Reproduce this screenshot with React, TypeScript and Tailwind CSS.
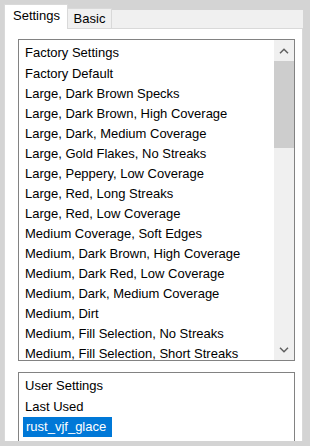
import React from "react";

const factoryItems = [
  "Factory Default",
  "Large, Dark Brown Specks",
  "Large, Dark Brown, High Coverage",
  "Large, Dark, Medium Coverage",
  "Large, Gold Flakes, No Streaks",
  "Large, Peppery, Low Coverage",
  "Large, Red, Long Streaks",
  "Large, Red, Low Coverage",
  "Medium Coverage, Soft Edges",
  "Medium, Dark Brown, High Coverage",
  "Medium, Dark Red, Low Coverage",
  "Medium, Dark, Medium Coverage",
  "Medium, Dirt",
  "Medium, Fill Selection, No Streaks",
  "Medium, Fill Selection, Short Streaks",
];

const Chevron = ({ dir }: { dir: "up" | "down" }) => (
  <svg width="10" height="6" viewBox="0 0 10 6" fill="none">
    <path
      d={dir === "up" ? "M1 5.2L5 1.2L9 5.2" : "M1 0.8L5 4.8L9 0.8"}
      stroke="#606060"
      strokeWidth="1.5"
    />
  </svg>
);

const App = () => {
  return (
    <div className="w-[310px] h-[446px] bg-[#d4d4d4] pl-[4px] pr-[7px] flex flex-col overflow-hidden font-['Liberation_Sans',Arial,sans-serif] text-[13px] text-black">
      {/* tab strip */}
      <div className="mt-[10px] h-[18px] shrink-0 bg-[#f0f0f0] flex items-end">
        <div className="relative z-10 mb-[-1px] h-[25px] w-[64px] shrink-0 bg-white border border-b-0 border-[#d9d9d9] flex items-center justify-center pb-[2px] pl-[1px]">
          Settings
        </div>
        <div className="h-[20px] w-[44px] shrink-0 bg-[#f0f0f0] border border-b-0 border-l-0 border-[#d9d9d9] flex items-center justify-center">
          Basic
        </div>
      </div>

      {/* panel */}
      <div className="flex-1 mb-[5px] bg-white border border-b-0 border-[#d9d9d9] pt-[10px] pl-[13px] pr-[7px] overflow-hidden">
        <div className="h-[322px] border border-[#828282] flex">
          <div className="flex-1 overflow-hidden pt-[2px] pl-[4px]">
            <div className="h-[22px] leading-[22px] pl-[2px] whitespace-nowrap">
              Factory Settings
            </div>
            {factoryItems.map((item, i) => (
              <div key={i} className="h-[20px] leading-[20px] pl-[2px] whitespace-nowrap">
                {item}
              </div>
            ))}
          </div>
          <div className="w-[20px] shrink-0 bg-[#f0f0f0] flex flex-col">
            <div className="h-[21px] flex items-center justify-center">
              <Chevron dir="up" />
            </div>
            <div className="h-[87px] bg-[#cdcdcd]" />
            <div className="flex-1" />
            <div className="h-[20px] flex items-center justify-center">
              <Chevron dir="down" />
            </div>
          </div>
        </div>

        <div className="mt-[11px] h-[90px] shrink-0 border border-[#828282] pt-[1px] pl-[4px]">
          <div className="h-[23px] leading-[23px] pl-[2px] whitespace-nowrap">User Settings</div>
          <div className="h-[20px] leading-[20px] pl-[2px] whitespace-nowrap">Last Used</div>
          <div className="h-[20px]">
            <span className="inline-block h-[20px] leading-[20px] bg-[#0078d7] text-white pl-[3px] pr-[6px] whitespace-nowrap">
              rust_vjf_glace
            </span>
          </div>
        </div>
      </div>
    </div>
  );
};

export default App;
